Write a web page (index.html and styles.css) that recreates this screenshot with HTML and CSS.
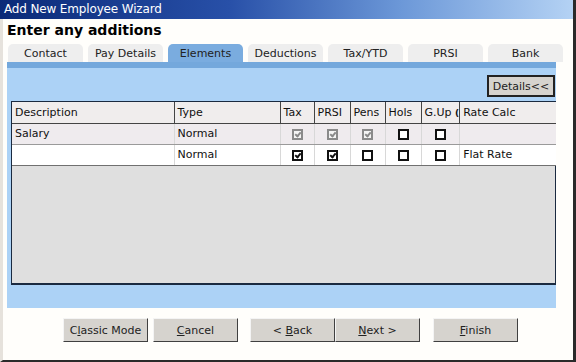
FILE: index.html
```html
<!DOCTYPE html>
<html lang="en">
<head>
    <meta charset="UTF-8">
    <title>Add New Employee Wizard</title>
    <link rel="stylesheet" href="styles.css">
</head>
<body>
    <div class="window">
        <div class="titlebar">Add New Employee Wizard</div>
        <h1 class="heading">Enter any additions</h1>
        <ul class="tabs">
            <li>Contact</li>
            <li>Pay Details</li>
            <li class="active">Elements</li>
            <li>Deductions</li>
            <li>Tax/YTD</li>
            <li>PRSI</li>
            <li>Bank</li>
        </ul>
        <div class="panel">
            <div class="panel-top">
                <button class="btn details">Details&lt;&lt;</button>
            </div>
            <div class="grid">
                <table>
                    <tr class="head">
                        <td class="c-desc">Description</td>
                        <td class="c-type">Type</td>
                        <td class="c-tax">Tax</td>
                        <td class="c-prsi">PRSI</td>
                        <td class="c-pens">Pens</td>
                        <td class="c-hols">Hols</td>
                        <td class="c-gup">G.Up <span class="cut">(</span></td>
                        <td class="c-rate">Rate Calc</td>
                    </tr>
                    <tr class="row1">
                        <td>Salary</td>
                        <td>Normal</td>
                        <td class="chk"><span class="box dis on"></span></td>
                        <td class="chk"><span class="box dis on"></span></td>
                        <td class="chk"><span class="box dis on"></span></td>
                        <td class="chk"><span class="box"></span></td>
                        <td class="chk"><span class="box"></span></td>
                        <td></td>
                    </tr>
                    <tr class="row2">
                        <td></td>
                        <td>Normal</td>
                        <td class="chk"><span class="box on"></span></td>
                        <td class="chk"><span class="box on"></span></td>
                        <td class="chk"><span class="box"></span></td>
                        <td class="chk"><span class="box"></span></td>
                        <td class="chk"><span class="box"></span></td>
                        <td>Flat Rate</td>
                    </tr>
                </table>
            </div>
        </div>
        <div class="buttons">
            <button class="btn">C<u>l</u>assic Mode</button>
            <button class="btn"><u>C</u>ancel</button>
            <div class="pair">
                <button class="btn">&lt; <u>B</u>ack</button>
                <button class="btn"><u>N</u>ext &gt;</button>
            </div>
            <button class="btn"><u>F</u>inish</button>
        </div>
    </div>
</body>
</html>
```

FILE: styles.css
```css
* {
    margin: 0;
    padding: 0;
    list-style: none;
    box-sizing: border-box;
}
body {
    width: 576px;
    height: 362px;
    overflow: hidden;
    background: #fff;
    font-family: "DejaVu Sans", Verdana, sans-serif;
    font-size: 11px;
    color: #111;
}
.window {
    width: 576px;
    height: 362px;
    background: #fffefb;
    border-left: 3px solid #e6e2dc;
    border-right: 3px solid #2a2a2a;
    border-bottom: 2px solid #2a2a2a;
}
.titlebar {
    height: 19px;
    margin-left: -3px;
    padding-left: 4px;
    line-height: 19px;
    color: #fff;
    font-size: 12px;
    letter-spacing: -0.15px;
    background: linear-gradient(to right, #0a2a78 0%, #2850a8 40%, #6c98d8 70%, #b4d2f4 100%);
}
.heading {
    font-size: 14px;
    font-weight: bold;
    height: 25px;
    line-height: 20px;
    padding: 1px 0 0 4px;
    color: #000;
}
.tabs {
    display: flex;
    gap: 5px;
    padding-left: 5px;
    height: 18px;
}
.tabs li {
    width: 75px;
    height: 18px;
    line-height: 19px;
    text-align: center;
    background: #eeeeee;
    border-radius: 5px 5px 0 0;
    color: #222;
}
.tabs li.active {
    background: #7aacdf;
}
.panel {
    width: 549px;
    height: 246px;
    margin-left: 4px;
    background: #acd2f6;
    border-top: 6px solid #74a8dc;
    padding: 7px 0 0 4px;
}
.panel-top {
    display: flex;
    justify-content: flex-end;
    height: 26px;
}
.btn {
    font-family: "DejaVu Sans", Verdana, sans-serif;
    font-size: 11px;
    color: #222;
    background: #d6d3ce;
    border: 1px solid;
    border-color: #f4f4f4 #404040 #404040 #f4f4f4;
    width: 85px;
    height: 24px;
}
.details {
    width: 68px;
    height: 22px;
    outline: 1px solid #222;
    outline-offset: -2px;
    border: 1px solid #222;
    box-shadow: inset 1px 1px 0 #fff, inset -1px -1px 0 #555;
    margin-right: 1px;
}
.grid {
    width: 545px;
    height: 184px;
    background: #dfdfdf;
    border: 1px solid #1a2a40;
    border-bottom-width: 2px;
}
table {
    border-collapse: collapse;
    width: 544px;
}
td {
    height: 21px;
    padding: 0 0 0 3px;
    border-right: 1px solid #9a9a9a;
    border-bottom: 1px solid #9a9a9a;
    white-space: nowrap;
    overflow: hidden;
}
.head td {
    background: #f0eded;
    border-right-color: #444;
    border-bottom-color: #444;
}
.row1 td {
    background: #efebee;
    border-right-color: #d8d8d8;
}
.row2 td {
    background: #fff;
    border-right-color: #d8d8d8;
    border-bottom-color: #707070;
}
td:last-child {
    border-right: 0;
}
.c-desc { width: 162px; }
.c-type { width: 106px; }
.c-tax { width: 34px; }
.c-prsi { width: 36px; }
.c-pens { width: 35px; }
.c-hols { width: 36px; }
.c-gup { width: 37px; }
.cut {
    font-size: 9px;
    font-weight: bold;
}
td.chk {
    text-align: center;
    padding: 0;
}
.box {
    display: inline-block;
    width: 11px;
    height: 11px;
    border: 2px solid #111;
    background: #fff;
    vertical-align: middle;
    position: relative;
}
.box.dis {
    border-color: #8a8a8a;
    background: #f4f4f4;
}
.box.on::after {
    content: "";
    position: absolute;
    left: 2px;
    top: 0;
    width: 2px;
    height: 4px;
    border: solid #111;
    border-width: 0 2px 2px 0;
    transform: rotate(40deg);
}
.box.dis.on::after {
    border-color: #8a8a8a;
}
.buttons {
    display: flex;
    align-items: flex-start;
    padding: 10px 0 0 60px;
    gap: 5px;
}
.pair {
    display: flex;
    margin-left: 7px;
    margin-right: 8px;
}
u {
    text-decoration: underline;
}
```
